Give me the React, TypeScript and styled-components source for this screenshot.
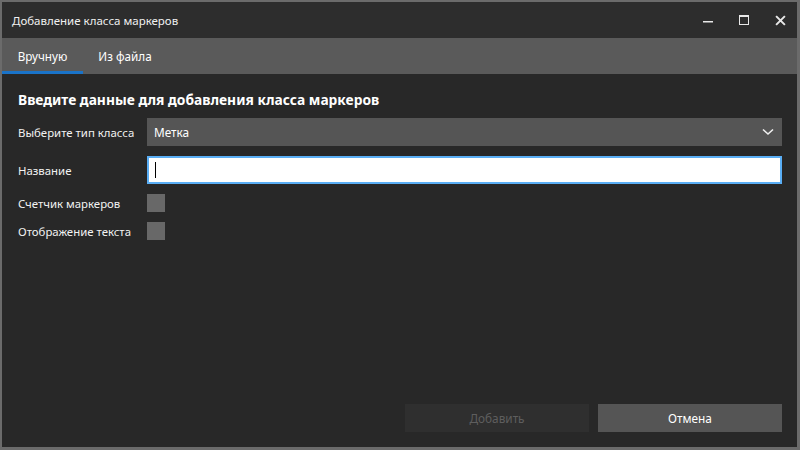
import { useState } from "react";
import styled, { createGlobalStyle } from "styled-components";

const GlobalStyle = createGlobalStyle`
  html, body {
    margin: 0;
    padding: 0;
    background: #6a6a6a;
  }
  body {
    font-family: "Segoe UI", "Noto Sans", "Open Sans", sans-serif;
    color: #ffffff;
  }
`;

const Window = styled.div`
  width: 800px;
  height: 450px;
  box-sizing: border-box;
  border-style: solid;
  border-color: #6b6b6b;
  border-width: 2px 3px 3px 2px;
  display: flex;
  flex-direction: column;
  background: #282828;
  overflow: hidden;
`;

const TitleBar = styled.div`
  height: 36px;
  flex-shrink: 0;
  display: flex;
  align-items: center;
  background: #2d2d2d;
  padding-left: 10px;
`;

const Title = styled.span`
  flex: 1;
  font-size: 11.5px;
  color: #f0f0f0;
  padding-top: 1px;
`;

const Controls = styled.div`
  display: flex;
  height: 100%;
  margin-right: -1px;
`;

const ControlButton = styled.button`
  width: 36px;
  height: 100%;
  border: none;
  background: transparent;
  display: flex;
  align-items: center;
  justify-content: center;
  padding: 0;
  color: #e8e8e8;
`;

const TabBar = styled.div`
  height: 36px;
  flex-shrink: 0;
  display: flex;
  background: #5a5a5a;
`;

const Tab = styled.div<{ $active?: boolean }>`
  box-sizing: border-box;
  width: ${(p) => (p.$active ? "81px" : "84px")};
  display: flex;
  align-items: center;
  justify-content: center;
  font-size: 11.7px;
  color: #ffffff;
  border-bottom: 3px solid ${(p) => (p.$active ? "#1a73c8" : "transparent")};
  padding-top: 3px;
`;

const Body = styled.div`
  flex: 1;
  display: flex;
  flex-direction: column;
  padding: 16px 15px 15px 16px;
`;

const Heading = styled.h1`
  margin: 0 0 8px;
  font-size: 13.8px;
  font-weight: 700;
  line-height: 20px;
`;

const Form = styled.div`
  display: grid;
  grid-template-columns: 129px 1fr;
  align-items: center;
  row-gap: 10px;
`;

const Label = styled.label`
  font-size: 11.4px;
  color: #f2f2f2;
`;

const Select = styled.div`
  height: 28px;
  background: #555555;
  display: flex;
  align-items: center;
  justify-content: space-between;
  padding: 0 8px 0 7px;
  font-size: 11.8px;
`;

const InputWrap = styled.div`
  position: relative;
`;

const TextInput = styled.input`
  box-sizing: border-box;
  height: 28px;
  width: 100%;
  border: 2px solid #5aaef5;
  background: #ffffff;
  outline: none;
  font-size: 12px;
  padding: 0 6px;
  caret-color: #000;
`;

const Caret = styled.span`
  position: absolute;
  left: 8px;
  top: 6px;
  width: 1px;
  height: 16px;
  background: #000;
`;

const CheckRow = styled.div`
  height: 18px;
  display: flex;
  align-items: center;
`;

const Checkbox = styled.span`
  width: 18px;
  height: 18px;
  background: #686868;
`;

const Footer = styled.div`
  margin-top: auto;
  display: flex;
  justify-content: flex-end;
  gap: 9px;
`;

const Button = styled.button<{ $disabled?: boolean }>`
  width: 184px;
  height: 28px;
  border: none;
  font-family: inherit;
  font-size: 11.8px;
  background: ${(p) => (p.$disabled ? "#2f2f2f" : "#555555")};
  color: ${(p) => (p.$disabled ? "#5e5e5e" : "#ffffff")};
`;

export default function App() {
  const [name, setName] = useState("");
  const [tab, setTab] = useState(0);

  return (
    <>
      <GlobalStyle />
      <Window>
        <TitleBar>
          <Title>Добавление класса маркеров</Title>
          <Controls>
            <ControlButton>
              <svg width="10" height="10" viewBox="0 0 10 10">
                <rect x="0" y="6" width="10" height="1.5" fill="currentColor" />
              </svg>
            </ControlButton>
            <ControlButton>
              <svg width="10" height="10" viewBox="0 0 10 10">
                <rect x="0.5" y="0.5" width="9" height="9" fill="none" stroke="currentColor" />
                <rect x="0" y="0" width="10" height="2" fill="currentColor" />
              </svg>
            </ControlButton>
            <ControlButton>
              <svg width="11" height="11" viewBox="0 0 10 10">
                <path d="M1 1 L9 9 M9 1 L1 9" stroke="currentColor" strokeWidth="1.8" />
              </svg>
            </ControlButton>
          </Controls>
        </TitleBar>
        <TabBar>
          <Tab $active={tab === 0} onClick={() => setTab(0)}>Вручную</Tab>
          <Tab $active={tab === 1} onClick={() => setTab(1)}>Из файла</Tab>
        </TabBar>
        <Body>
          <Heading>Введите данные для добавления класса маркеров</Heading>
          <Form>
            <Label>Выберите тип класса</Label>
            <Select>
              <span>Метка</span>
              <svg width="12" height="8" viewBox="0 0 12 8">
                <path d="M1 1.5 L6 6 L11 1.5" fill="none" stroke="#f0f0f0" strokeWidth="1.6" />
              </svg>
            </Select>
            <Label>Название</Label>
            <InputWrap>
              <TextInput value={name} onChange={(e) => setName(e.target.value)} />
              {name === "" && <Caret />}
            </InputWrap>
            <Label>Счетчик маркеров</Label>
            <CheckRow>
              <Checkbox />
            </CheckRow>
            <Label>Отображение текста</Label>
            <CheckRow>
              <Checkbox />
            </CheckRow>
          </Form>
          <Footer>
            <Button $disabled>Добавить</Button>
            <Button>Отмена</Button>
          </Footer>
        </Body>
      </Window>
    </>
  );
}
